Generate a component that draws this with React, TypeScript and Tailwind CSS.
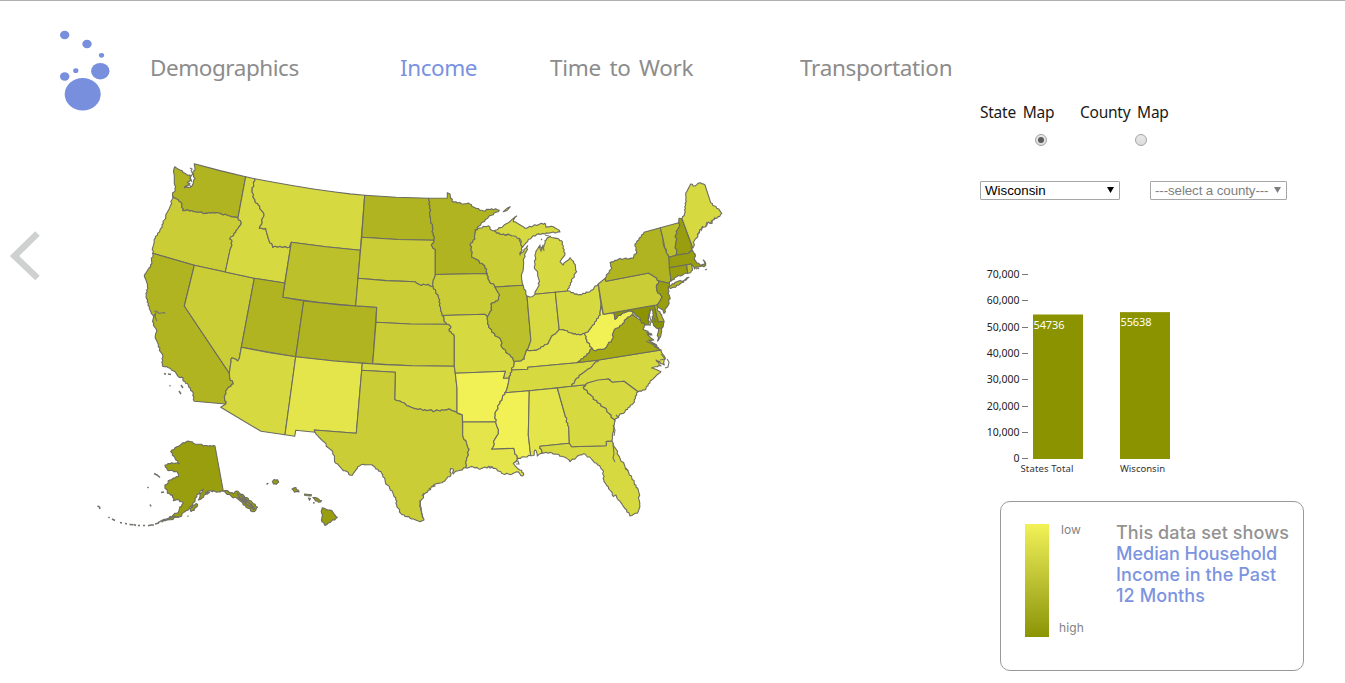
import React, { useState } from "react";

type Shape = { id: string; fill: string; d: string };

const C = {
  c1: "#f1f156",
  c2: "#e4e54b",
  c3: "#d7d941",
  c4: "#cacd35",
  c5: "#bcc12b",
  c6: "#b0b420",
  c7: "#a4a915",
  c8: "#989e0d",
  c9: "#8b9400",
};

// Outline notation: "x,y" continues with a straight edge, "~x,y" with a natural (river or coast) edge.
const STATES: Shape[] = [
  { id: "WA", fill: C.c6, d: "174.7,166.7 ~180,170 ~185,173.3 ~190,175 ~190.7,180 ~187.3,182.3 ~190,183.5 ~184.3,187.7 ~190,187.3 ~193.3,182.7 ~195,178.3 ~192.7,172.7 ~195,168.3 ~194.3,163.7 220,170.6 245.7,176.7 238,217.7 ~230,216 ~218.3,213 ~205,213.3 ~195,211.7 ~186.7,210 ~182.7,210.7 ~181.7,203.3 ~178.3,200 ~172.7,196.7 ~172.7,192.7 ~175.3,190.7 ~174.7,185 ~174.3,176.7 ~173.7,170" },
  { id: "OR", fill: C.c4, d: "172.7,196.7 ~178.3,200 ~181.7,203.3 ~182.7,210.7 ~186.7,210 ~195,211.7 ~205,213.3 ~218.3,213 ~230,216 ~238,217.7 ~241.3,222.7 ~236,230.7 ~230,239.3 ~232,241.7 ~230,250 225.3,272 194.3,265.3 152.7,253.3 ~154,240 ~160,230 ~165.7,216.7 ~170,206.7 ~172.7,196.7" },
  { id: "CA", fill: C.c6, d: "152.7,253.3 194.3,265.3 184.3,306 229.3,373.3 ~230,378.3 ~233.3,384 ~227.7,388.3 ~224.3,396.7 ~225.7,404 194.3,401.3 ~193.3,393.3 ~188.3,385 ~183.3,381 ~183.3,378 ~178.3,376.7 ~173.3,370.7 ~168.3,367.7 ~162.3,366 ~162.7,355 ~158.3,346.7 ~155.3,338.3 ~156.7,331.7 ~153.3,325 ~152.7,315 ~150,310 ~149.3,306.7 ~146,296.7 ~147.3,286.7 ~144.3,275 ~150.7,266.7 ~152.7,253.3" },
  { id: "NV", fill: C.c4, d: "194.3,265.3 225.3,272 254.3,278.3 241.3,347.3 239.3,358.3 ~237.3,361 ~231.7,358 ~230.7,363.3 229.3,373.3 184.3,306 194.3,265.3" },
  { id: "ID", fill: C.c3, d: "245.7,176.7 254.7,178.7 ~252,191.7 ~255,201.7 ~258.3,205 ~264,214 ~262,221.7 ~259.3,228.3 ~265.7,228.3 ~267.7,236 ~272.7,247.3 ~280,246.3 ~289.3,247.3 291.3,242.3 284.7,283 254.3,278.3 225.3,272 230,250 ~232,241.7 ~230,239.3 ~236,230.7 ~241.3,222.7 ~238,217.7 245.7,176.7" },
  { id: "MT", fill: C.c3, d: "254.7,178.7 275,182.5 295,186 315,189.2 335,192 350,193.9 364.7,195.3 360.3,250.3 326,246.8 291.3,242.3 289.3,247.3 ~280,246.3 ~272.7,247.3 ~267.7,236 ~265.7,228.3 ~259.3,228.3 ~262,221.7 ~264,214 ~258.3,205 ~255,201.7 ~252,191.7 ~254.7,178.7" },
  { id: "WY", fill: C.c5, d: "291.3,242.3 326,246.8 360.3,250.3 355.7,306 320,302.6 282.7,297.3 291.3,242.3" },
  { id: "UT", fill: C.c6, d: "254.3,278.3 284.7,283 282.7,297.3 303.7,301 295.7,356.7 241.3,347.3 254.3,278.3" },
  { id: "AZ", fill: C.c3, d: "241.3,347.3 268,352.5 295.7,356.7 285,434.7 261,431.3 220.7,407.3 225.7,404 ~224.3,396.7 ~227.7,388.3 ~233.3,384 ~230,378.3 ~229.3,373.3 230.7,363.3 ~231.7,358 ~237.3,361 ~239.3,358.3 241.3,347.3" },
  { id: "CO", fill: C.c6, d: "303.7,301 340,304.9 376.7,307.3 372.7,363.7 334,361 295.7,356.7 303.7,301" },
  { id: "NM", fill: C.c2, d: "295.7,356.7 334,361 362.3,363.3 356.3,433.3 314.3,430 315.3,432.3 295.7,430.3 294.7,436.3 285,434.7 295.7,356.7" },
  { id: "ND", fill: C.c6, d: "364.7,195.3 396,197.3 428.7,198.3 ~430,211.7 ~432.3,226.7 ~434,240.3 398,239.5 361.7,237.3 364.7,195.3" },
  { id: "SD", fill: C.c4, d: "361.7,237.3 398,239.5 434,240.3 ~431.3,245 ~435.3,249.3 435.3,274.5 ~433.3,280 ~433.3,286.7 ~428.3,284.3 ~420,285 ~415,281.7 386,280.6 358,278.3 361.7,237.3" },
  { id: "NE", fill: C.c4, d: "358,278.3 386,280.6 415,281.7 ~420,285 ~428.3,284.3 ~433.3,286.7 ~438.3,296.7 ~440.7,308.3 ~442.3,315.5 ~446.7,324.3 410,324 376,322.3 376.7,307.3 355.7,305.7 358,278.3" },
  { id: "KS", fill: C.c4, d: "376,322.3 410,324 446.7,324.3 ~451,326.7 ~449.3,331 ~454.3,336 454.3,366.3 412,365.8 372.7,363.7 376,322.3" },
  { id: "OK", fill: C.c3, d: "362.3,363.3 385,364.6 412,365.8 454.3,366.3 455.3,373.3 457,388.3 457,412.7 ~450,409.3 ~445,410 ~435,411 ~426.7,410.7 ~416.7,409 ~406.7,405.7 ~401.7,402.3 ~394.7,399.3 395.3,372.3 361.7,370.3 362.3,363.3" },
  { id: "TX", fill: C.c4, d: "361.7,370.3 395.3,372.3 394.7,399.3 ~401.7,402.3 ~406.7,405.7 ~416.7,409 ~426.7,410.7 ~435,411 ~445,410 ~450,409.3 ~457,412.7 ~462.3,414.7 462.7,436 ~469.3,449.3 ~466.7,460 ~465.7,467.7 ~458.3,470.7 ~453.3,474 ~453,469 ~450.5,468.5 ~451,475 ~443.3,481.7 ~433.3,485.7 ~426,492.7 ~420,501.7 ~420.7,510 ~424,520 ~420,521.7 ~411.7,519 ~400.7,513.3 ~396.7,505 ~395.7,497.7 ~387.3,485 ~381.7,473.3 ~373.3,466 ~363.3,464.3 ~357.7,466.7 ~352.3,475.3 ~343.3,470.7 ~335.7,463.3 ~332.7,452.3 ~315,432.3 314.3,430 356.3,433.3 361.7,370.3" },
  { id: "MN", fill: C.c6, d: "428.7,198.3 447.3,198 447.3,192.7 450,194 ~452,201.3 ~463.3,204 ~468.3,203 ~475,207.7 ~483.3,210.7 ~491.7,208.7 ~499.3,210.3 ~488.3,217.3 ~475.3,229.7 ~475,239 ~470.7,243.3 ~472,257.3 ~481.7,263.3 ~486.7,269 ~487.3,273.5 435.3,274.5 435.3,249.3 ~431.3,245 ~434,240.3 ~432.3,226.7 ~430,211.7 ~428.7,198.3" },
  { id: "IA", fill: C.c4, d: "435.3,274.5 487.3,273.5 ~489,280 ~495,287 ~499.7,295 ~497.7,300.7 ~491,304 ~491.7,310 ~487.3,316.7 ~485,314.3 442.3,315.5 ~440.7,308.3 ~438.3,296.7 ~433.3,286.7 ~433.3,280 ~435.3,274.5" },
  { id: "MO", fill: C.c3, d: "442.3,315.5 485,314.3 ~487.3,316.7 ~487.5,324 ~495,335.7 ~500,338.3 ~502.7,348.3 ~510,355 ~514.3,361.7 ~511.7,370 ~509.3,378.3 503.3,378.3 505.3,371.3 455.3,373.3 454.3,366.3 454.3,336 ~449.3,331 ~451,326.7 ~446.7,324.3 ~442.3,315.5" },
  { id: "AR", fill: C.c1, d: "455.3,373.3 505.3,371.3 503.3,378.3 509.3,378.3 ~505,392.7 ~500,403.3 ~495,413.3 ~495.7,421.7 462.7,422 462.3,414.7 457,412.7 457,388.3 455.3,373.3" },
  { id: "LA", fill: C.c2, d: "462.7,422 495.7,421.7 ~498.3,431.7 ~491.7,449 513.7,448.3 ~517.3,459.3 ~513.3,463.3 ~520,470 ~523.5,473 ~522.7,476 ~516.7,471.7 ~511.7,474.3 ~501.7,473.3 ~495,468.3 ~488.3,466.7 ~480,469.3 ~473.3,467 ~465.7,467.7 ~466.7,460 ~469.3,449.3 ~462.7,436 462.7,422" },
  { id: "WI", fill: C.c4, d: "475.3,229.7 ~488.3,225.7 ~490,229.3 ~494.3,230.7 ~500,234 ~516.7,235.7 ~520,241.7 ~522.3,246.7 ~520,255 ~527.7,245.7 ~523.3,260 ~522,273.3 ~523,285.3 495,287 ~489,280 ~487.3,273.5 ~486.7,269 ~481.7,263.3 ~472,257.3 ~470.7,243.3 ~475,239 ~475.3,229.7" },
  { id: "IL", fill: C.c5, d: "495,287 523,285.3 ~527,296 530.7,338.3 ~526.7,350 ~524.3,359.3 ~521.7,360.7 ~514.3,361.7 ~510,355 ~502.7,348.3 ~500,338.3 ~495,335.7 ~487.5,324 ~487.3,316.7 ~491.7,310 ~491,304 ~497.7,300.7 ~499.7,295 ~495,287" },
  { id: "MIU", fill: C.c3, d: "494.3,230.7 ~503.3,226 ~510.7,220.7 ~516.7,216 ~513.3,221.7 ~525,228.3 ~533.3,225.7 ~545,223.3 ~546,227.3 ~553.3,226.7 ~560,232 ~548.3,233.3 ~536.7,234.3 ~528.3,239.3 ~522.7,247.3 ~519.3,238.3 ~510,235 ~500,234 ~494.3,230.7" },
  { id: "MIL", fill: C.c3, d: "535,294.3 ~539.3,285 ~537.7,273.3 ~534.3,266.7 ~535.7,253.3 ~540,245 ~542,249.5 ~544,245 ~545,240.7 ~550,236 ~561.7,240.7 ~565,253.3 ~560,261.7 ~563.3,265 ~570,257.7 ~574,263.3 ~576.7,271.7 ~572.7,278.3 ~567.7,291 555.3,292.3 535,294.3" },
  { id: "IN", fill: C.c3, d: "527,296.3 ~530,297 ~535,294.3 555.3,292.3 559.2,329.5 ~553.3,335 ~548.3,343.3 ~538.3,349.3 ~526.7,350 ~530.7,338.3 527,296.3" },
  { id: "OH", fill: C.c3, d: "555.3,292.3 567.7,291 ~578.3,295 ~590,291.7 ~598.3,284 601,305 ~600.3,315 ~591.7,326.7 ~588.3,331.7 ~584.7,333.3 ~580,335 ~570,332.7 ~563,329.5 ~559.2,329.5 555.3,292.3" },
  { id: "KY", fill: C.c2, d: "514.3,361.7 ~521.7,360.7 ~524.3,359.3 ~526.7,350 ~538.3,349.3 ~548.3,343.3 ~553.3,335 ~559.2,329.5 ~563,329.5 ~570,332.7 ~580,335 ~584.7,333.3 ~586.7,341.7 ~592.3,348.3 ~583.3,358.3 576.7,362.7 527.7,367.3 527.7,369.3 511.7,370 ~514.3,361.7" },
  { id: "TN", fill: C.c3, d: "511.7,370 527.7,369.3 527.7,367.3 576.7,362.7 598.7,360 ~590,368.3 ~576.7,378.3 ~571.7,386.3 529.3,390.7 505,392.7 ~509.3,378.3 ~511.7,370" },
  { id: "MS", fill: C.c1, d: "505,392.7 529.3,390.7 528.3,435 530.7,455.7 ~523.3,456.7 ~517.3,459.3 ~513.7,448.3 491.7,449 ~498.3,431.7 ~495.7,421.7 ~495,413.3 ~500,403.3 ~505,392.7" },
  { id: "AL", fill: C.c2, d: "529.3,390.7 557.3,388 565,415 ~568.7,426.7 569.3,443.3 540,446.3 ~542.3,453.3 ~537.3,456 ~535,450 ~534,455.5 530.7,455.7 528.3,435 529.3,390.7" },
  { id: "FL", fill: C.c3, d: "540,446.3 569.3,443.3 571.7,446.7 606,445.7 ~606,441.7 ~612,440.7 ~613.3,443.3 ~620,458.3 ~628.3,471.7 ~638.3,490 ~639.7,505 ~637.3,513.3 ~630,516 ~626.7,510 ~618.3,500 ~616,495 ~613.3,496.5 ~608.3,486.7 ~604,481.7 ~602.7,470 ~596.7,463.3 ~585,454 ~580,455 ~570,461.7 ~563.3,456.7 ~551.7,452.7 ~542.3,453.3 ~540,446.3" },
  { id: "GA", fill: C.c3, d: "557.3,388 571.7,386.3 585.3,384.7 ~583.3,387.3 ~595,400 ~606.7,410 ~615,420.7 ~612.7,433.3 ~612,440.7 ~606,441.7 ~606,445.7 571.7,446.7 569.3,443.3 568.7,426.7 ~565,415 557.3,388" },
  { id: "NC", fill: C.c3, d: "598.7,360 661,350 ~665.3,358.3 ~664.3,365 ~656,360 ~661,366 ~657.3,366.7 ~651.5,368 ~661,371.7 ~656,376 ~651.7,380 ~645,390 ~638,391.7 624,381.3 612.3,382.3 ~608.3,379 588.3,382.7 585.3,384.7 571.7,386.3 ~576.7,378.3 ~590,368.3 ~598.7,360" },
  { id: "SC", fill: C.c3, d: "583.3,387.3 ~588.3,382.7 598,380 608.3,379 612.3,382.3 624,381.3 638,391.7 ~633.3,403.3 ~625,411.7 ~617.3,416.7 ~615,420.7 ~606.7,410 ~595,400 ~583.3,387.3" },
  { id: "VA", fill: C.c7, d: "576.7,362.7 ~583.3,358.3 ~592.3,348.3 ~595.7,350.7 ~605,348.3 ~611.7,340 ~614,330 ~621.7,325 ~628.3,316.7 ~633.3,315 ~641.7,320 ~645,325 ~643,329 ~652,335 ~647,334 ~653.8,340 ~649,340 ~657,346 ~652,344 ~661,350 598.7,360 576.7,362.7" },
  { id: "WV", fill: C.c1, d: "601,305 603.3,314.3 614,313 615,319.3 ~622.7,313 ~631,311 ~633.3,315 ~628.3,316.7 ~621.7,325 ~614,330 ~611.7,340 ~605,348.3 ~595.7,350.7 ~592.3,348.3 ~586.7,341.7 ~584.7,333.3 ~588.3,331.7 ~591.7,326.7 ~600.3,315 ~601,305" },
  { id: "MD", fill: C.c9, d: "614,312.5 654.3,305.3 658.3,321.7 664,321.3 ~661.7,328.3 ~659.3,329 ~655,326.7 ~651.7,320 ~653,312 ~650.7,309.5 ~648.3,316.7 ~649.3,325 ~641.7,323.3 ~638.3,316.7 ~631,311 ~622.7,313 ~615,319.3 614,312.5" },
  { id: "VAE", fill: C.c7, d: "658.3,328.5 ~661.5,328.7 ~659.3,338.3 ~657.5,341 ~658.3,328.5" },
  { id: "DE", fill: C.c6, d: "654.3,305.3 ~657.3,305.5 ~657.3,309.3 ~661.7,315 ~664,321.3 658.3,321.7 654.3,305.3" },
  { id: "PA", fill: C.c4, d: "598.3,284 605,278.3 606,281.3 649,273 ~653.3,276 ~659,281 ~656.7,285 ~657.3,291.7 ~662.3,296.7 ~656.7,305 654.3,305.3 603.3,314.3 598.3,284" },
  { id: "NY", fill: C.c6, d: "606,281.3 605,278.3 ~611.7,267.7 ~610,262.7 ~618.3,259.3 ~633.3,258.3 ~636.7,251.7 ~635,244 ~644,232.3 660.3,227.7 663.3,240 ~665,248.3 669,257.3 670,270 ~671,281 ~669.3,283.3 659,281 ~653.3,276 ~649,273 606,281.3" },
  { id: "LI", fill: C.c6, d: "668.3,287.3 ~676.7,281.7 ~684,280.5 ~689,277.3 ~680,284 ~670.7,288.5 ~668.3,287.3" },
  { id: "NJ", fill: C.c8, d: "659,281 669.3,283.3 ~668.3,289.3 ~669.7,296.7 ~668.3,305 ~664,313.3 ~661.7,309.3 ~656.7,305 ~662.3,296.7 ~657.3,291.7 ~656.7,285 ~659,281" },
  { id: "VT", fill: C.c5, d: "660.3,227.7 678.7,222.7 ~679.3,226.7 ~675.7,235 ~676,255.3 669,257.3 ~665,248.3 663.3,240 660.3,227.7" },
  { id: "NH", fill: C.c8, d: "678.7,222.7 679,218.3 682,218.7 691.7,245 ~692.7,250.7 ~688.3,253.3 676,255.3 ~675.7,235 ~679.3,226.7 ~678.7,222.7" },
  { id: "ME", fill: C.c3, d: "682,218.7 ~685.3,211.7 ~685.7,200 ~686.7,191.7 690.7,184 ~695,186 ~700,182.7 ~705,185 710.7,202.7 ~716.7,208.3 ~721.7,213.3 ~716.7,218.3 ~713,220 ~712,223.5 ~708.3,222 ~705,227 ~702,227 ~699,233.3 ~694.3,240.7 ~692.7,248.3 691.7,245 682,218.7" },
  { id: "MA", fill: C.c8, d: "669,257.3 676,255.3 688.3,253.3 ~692.7,250.7 ~695,254 ~694.3,259.3 ~700,265 ~704.7,264.3 ~703.3,260 ~705.7,263.3 ~704,266.7 ~696.7,267 ~694.5,269 ~691,264 686.7,264.7 669.3,267.7 669,257.3" },
  { id: "CT", fill: C.c8, d: "669.3,267.7 686.7,264.7 687.7,273.3 ~676.7,276.7 ~671,281 669.3,267.7" },
  { id: "RI", fill: C.c5, d: "686.7,264.7 691,264 ~692.3,268.3 ~690.7,272.7 687.7,273.3 686.7,264.7" },
  { id: "AK", fill: C.c8, d: "188.3,441 ~195,444 ~205,445.5 ~215,446 223.3,491 ~218.3,491.7 ~208.3,491 ~206.7,493.5 ~202,498 ~198.3,500 ~200,494 ~203.3,489.3 ~196.7,495 ~195,501.7 ~188.3,510 ~178.3,517.3 ~167.3,520 ~162,522 ~170,516.5 ~176.7,513.3 ~183.3,503.3 ~179,500 ~173.3,500.7 ~172.7,495 ~167.3,493.3 ~165,485 ~170,480 ~178.3,476.7 ~177.3,471.7 ~167.3,470 ~165,465 ~171.7,462.7 ~179.3,464 ~175,458.3 ~170.7,451.7 ~176.7,446.7 ~188.3,441" },
  { id: "AKP", fill: C.c8, d: "223.3,491 ~227,490.5 ~233.3,494 ~236.7,491 ~246.7,497.5 ~252,502 ~257.5,507.3 ~256,510 ~252.7,511.7 ~243.3,505 ~238,499 ~231.7,496.7 ~223.3,491" },
  { id: "AKK", fill: C.c8, d: "190.5,508 ~196,503.5 ~197.5,506 ~194,510.5 ~191,511.5 ~190.5,508" },
  { id: "HI1", fill: C.c8, d: "322.3,507.7 ~330,510 ~337.3,517.3 ~328.3,523 ~325,525.5 ~322,521.7 ~321.7,513.3 ~322.3,507.7" },
  { id: "HI2", fill: C.c8, d: "272.3,481.5 ~274,479.5 ~277.5,479.7 ~278.7,482 ~276.5,484.3 ~273.5,484 ~272.3,481.5" },
  { id: "HI3", fill: C.c8, d: "292,489 ~296,487.5 ~299,492 ~294.5,492.3 ~292,489" },
  { id: "HI4", fill: C.c8, d: "304.5,494 311.5,494.7 311,496 304.8,495.5 304.5,494" },
  { id: "HI5", fill: C.c8, d: "313,497.5 ~317,498 ~321.7,500.7 ~318.5,502.3 ~315.5,501 ~313,497.5" },
  { id: "HI6", fill: C.c8, d: "308.5,498 310.5,498.5 309.5,500.2 308.5,498" },
  { id: "IR", fill: C.c3, d: "503.3,211.7 507,208.3 510.3,206.7 507,210.5 503.3,211.7" },
];

const hash = (n: number) => {
  const s = Math.sin(n) * 43758.5453;
  return s - Math.floor(s) - 0.5;
};

type Pt = [number, number];

// Breaks an edge into small irregular steps; the result is the same in either direction.
function naturalEdge(a: Pt, b: Pt): Pt[] {
  const flip = a[0] > b[0] || (a[0] === b[0] && a[1] > b[1]);
  const [p, q] = flip ? [b, a] : [a, b];
  const len = Math.hypot(q[0] - p[0], q[1] - p[1]);
  const n = Math.max(1, Math.round(len / 1.8));
  const out: Pt[] = [];
  for (let i = 1; i < n; i++) {
    const t = i / n;
    const o = hash(p[0] * 12.9 + p[1] * 78.2 + i * 37.7) * 1.8;
    out.push([
      p[0] + (q[0] - p[0]) * t - ((q[1] - p[1]) / len) * o,
      p[1] + (q[1] - p[1]) * t + ((q[0] - p[0]) / len) * o,
    ]);
  }
  return flip ? out.reverse() : out;
}

function toPath(d: string): string {
  let prev: Pt | null = null;
  const pts: Pt[] = [];
  for (const token of d.split(" ")) {
    const natural = token[0] === "~";
    const [x, y] = (natural ? token.slice(1) : token).split(",").map(Number);
    const cur: Pt = [x, y];
    if (prev && natural) pts.push(...naturalEdge(prev, cur));
    pts.push(cur);
    prev = cur;
  }
  return "M" + pts.map((p) => p[0].toFixed(1) + "," + p[1].toFixed(1)).join("L") + "Z";
}

const INLETS = [
  "M154,311 l3,0.5 l2,2 l5,-1 l1,1 M156,312 l-1,5 l2,4 M154,314 l2,5",
  "M190,168 l2,1 l-1,2 M191,171 l2,3 l-3,3 l2,5 M186,187 l3,-3 l2,3",
  "M420,500 l1,10 l2,8 M422,496 l2,-3 M434,484 l1,2 l-3,1 M429,488 l2,2",
  "M488,466 l2,2 l3,-1 M515,462 l3,-1 l1,3 l-3,0",
  "M613,444 l1,10 l-1,4 l2,4 M626,468 l2,3",
  "M652,334 l-6,-2 M654,345 l-8,-4 M660,350 l-6,-4",
  "M667,359 l2,3 l-1,5 l-3,1 M661,354 l4,5 l-5,1",
  "M651,309 l-2,5 l2,7 l-1,5 M654,318 l2,5",
  "M697,235 l3,-4 M701,231 l2,-5 M706,226 l1,-4 M710,224 l2,-4 M714,220 l1,-3",
  "M539,246 l2,5 l2,-6 l1,6 M541,239 l1,1 M545,235 l4,1",
  "M616,415 l3,3 M613,425 l2,5 l-1,6",
  "M696,269 l2,-1 l1,1 M705,270 l2,-1",
];

const ISLANDS = [
  "M164,373.5 l2,0.8 M168,374 l3,0.6 M169.5,385.5 l1,0.5 M181,385 l2,3 M179,391 l2,3",
  "M154,473.5 l3,1.5 l3,2.5 M147.5,487 l1,1 M161,492.5 l3,-0.5 M150,504.5 l1,2",
  "M97.5,506 l2,1 l0.5,2 M108.5,517 l1,1 M112,519 l3,1.5 M120,522.5 l2,0.5 M125,523.5 l2,0.3 M129.5,524.5 l4,0.3 M134,524.5 l2,1",
  "M138,525.5 l2,0 M143,525.6 l2,0 M148,525.7 l3,-0.7 l3,0 M155,524 l4,-1 M158,522.6 l6,-3 l6,-0.5 M166,519.5 l8,-3 l5,0.5",
  "M266.5,484.5 l1.8,-1.5 M313,502.8 l1.6,0.3 M187.5,516 l1,0.4",
  "M237,493 l3,5 l4,2 l3,5 l5,2 l2,3 M240,494 l6,7 l5,3 l4,5 M244,497 l8,9 M238,497 l9,8 l6,4",
  "M205,492 l2,2 l3,-2 M207,493 l2,-1.5 M212,492 l2,-2",
];

function StateMap() {
  return (
    <svg className="block h-[380px] w-[640px]" viewBox="90 155 640 380" role="img">
      <g stroke="#6b6b62" strokeWidth="1.1" strokeLinejoin="round">
        {STATES.map((s) => (
          <path key={s.id} d={toPath(s.d)} fill={s.fill} />
        ))}
      </g>
      <g fill="none" stroke="#72726a" strokeWidth="1.1">
        {INLETS.map((d) => (
          <path key={d} d={d} />
        ))}
        {ISLANDS.map((d) => (
          <path key={d} d={d} strokeWidth="1.5" />
        ))}
      </g>
    </svg>
  );
}

function Logo() {
  return (
    <svg className="h-[82px] w-[52px] shrink-0" viewBox="59 29 52 82" fill="#778fdc">
      <ellipse cx="64.7" cy="35" rx="4.7" ry="4.2" />
      <ellipse cx="87" cy="44" rx="4.7" ry="4.2" />
      <ellipse cx="101.5" cy="55.3" rx="2.6" ry="2.4" />
      <ellipse cx="100.3" cy="71.2" rx="9.2" ry="8.3" />
      <ellipse cx="75.8" cy="70.7" rx="2.6" ry="2.4" />
      <ellipse cx="64.7" cy="76.5" rx="4.7" ry="4.2" />
      <ellipse cx="82.7" cy="94.2" rx="18" ry="16.2" />
    </svg>
  );
}

const TABS = [
  { label: "Demographics", box: "w-[250px]", spacing: "tracking-[-0.45px]" },
  { label: "Income", box: "w-[150px]", spacing: "tracking-[-0.45px]" },
  { label: "Time to Work", box: "w-[250px]", spacing: "tracking-[-0.3px]" },
  { label: "Transportation", box: "w-[180px]", spacing: "tracking-[-0.3px]" },
];

function Nav() {
  const [active, setActive] = useState("Income");
  return (
    <nav className="flex">
      {TABS.map((t) => (
        <button
          key={t.label}
          onClick={() => setActive(t.label)}
          className={`${t.box} ${t.spacing} text-left whitespace-nowrap font-['Noto_Sans',sans-serif] text-[22.5px] leading-8 font-normal [word-spacing:3px] ${
            active === t.label ? "text-[#7a92e0]" : "text-[#8c8c8c]"
          }`}
        >
          {t.label}
        </button>
      ))}
    </nav>
  );
}

function Radio({ checked, onSelect }: { checked: boolean; onSelect: () => void }) {
  return (
    <button
      role="radio"
      aria-checked={checked}
      onClick={onSelect}
      className="flex size-3 items-center justify-center rounded-full border border-[#a3a3a3] bg-linear-to-b from-[#e8e8e8] to-[#dcdcdc]"
    >
      {checked && <span className="size-1.5 rounded-full bg-[#5c5c5c]" />}
    </button>
  );
}

function Picker({ label, className }: { label: string; className: string }) {
  return (
    <button
      className={`flex h-[19px] items-center justify-between rounded-[1px] border border-[#a6a6a6] bg-white pl-1 font-['Liberation_Sans',sans-serif] text-[13.33px] leading-none whitespace-nowrap ${className}`}
    >
      <span>{label}</span>
      <svg className="-mt-0.5 h-1.5 w-[7px] shrink-0" viewBox="0 0 7 6" fill="currentColor">
        <path d="M0 0H7L3.5 6Z" />
      </svg>
    </button>
  );
}

const TICKS = ["70,000", "60,000", "50,000", "40,000", "30,000", "20,000", "10,000", "0"];
const BARS = [
  { label: "States Total", value: 54736, x: 1033, labelX: 1047, width: 53 },
  { label: "Wisconsin", value: 55638, x: 1120, labelX: 1142.5, width: 45 },
];

function BarChart() {
  return (
    <svg className="block h-[220px] w-[220px] font-['Noto_Sans',sans-serif]" viewBox="980 260 220 220">
      {TICKS.map((t, i) => {
        const y = 274.3 + i * 26.35;
        return (
          <g key={t}>
            <text x="1019.5" y={Math.floor(y) + 4} textAnchor="end" fontSize="10.5" fill="#222222">
              {t}
            </text>
            <path d={`M1022 ${Math.floor(y) + 0.5}h6`} stroke="#777777" />
          </g>
        );
      })}
      {BARS.map((b) => {
        const h = (b.value / 70000) * 184.8;
        return (
          <g key={b.label}>
            <rect x={b.x} y={459 - h} width="50" height={h} fill="#8b9400" />
            <text x={b.x + 0.5} y={473.2 - h} fontSize="11" fill="#ffffff" textLength="31">
              {b.value}
            </text>
            <text x={b.labelX} y="472" textAnchor="middle" fontSize="9.5" fill="#333333" textLength={b.width}>
              {b.label}
            </text>
          </g>
        );
      })}
    </svg>
  );
}

function Legend() {
  return (
    <div className="flex h-[170px] w-[304px] rounded-[10px] border border-[#999999] pt-[22px] pl-6 font-['Inter',sans-serif]">
      <div className="h-[113px] w-6 bg-linear-to-b from-[#f2f257] to-[#8b9400]" />
      <div className="flex h-[113px] w-[67px] flex-col justify-between pl-[10px] text-xs leading-3 text-[#828282]">
        <span className="pl-0.5">low</span>
        <span className="pb-[3px] tracking-[0.1px]">high</span>
      </div>
      <p className="-mt-0.5 text-[18px] leading-[21px] font-medium tracking-[0.1px] whitespace-nowrap text-[#929292]">
        This data set shows
        <span className="block text-[#7c94e0]">
          <span className="tracking-[0px]">Median Household</span>
          <br />
          Income in the Past
          <br />
          12 Months
        </span>
      </p>
    </div>
  );
}

export default function App() {
  const [mode, setMode] = useState<"state" | "county">("state");
  return (
    <div className="flex h-[683px] w-[1345px] overflow-hidden border-t border-[#b0b0b0] bg-white">
      <main className="w-[980px] shrink-0">
        <header className="flex h-[154px] pt-[28px] pl-[59px]">
          <Logo />
          <div className="pt-[23px] pl-[39px]">
            <Nav />
          </div>
        </header>
        <div className="flex items-start">
          <button aria-label="Previous" className="flex w-[90px] pt-[75px] pl-[10px]">
            <svg className="block h-[52px] w-[32px]" viewBox="10 230 32 52" fill="none" stroke="#cfd1d0" strokeWidth="6.5">
              <path d="M37.5 233.5L14.5 256L37.5 278" />
            </svg>
          </button>
          <StateMap />
        </div>
      </main>
      <aside className="flex w-[365px] flex-col pt-[99px]">
        <div className="flex font-['Noto_Sans',sans-serif] text-[15.5px] leading-6 font-normal tracking-[-0.25px] text-[#1a1a1a] [word-spacing:3px]">
          <div className="w-[100px]">
            <div className="whitespace-nowrap">State Map</div>
            <div className="pt-[10px] pl-[55px]">
              <Radio checked={mode === "state"} onSelect={() => setMode("state")} />
            </div>
          </div>
          <div className="w-[100px]">
            <div className="whitespace-nowrap">County Map</div>
            <div className="pt-[10px] pl-[55px]">
              <Radio checked={mode === "county"} onSelect={() => setMode("county")} />
            </div>
          </div>
        </div>
        <div className="flex gap-[30px] pt-[35px]">
          <Picker label="Wisconsin" className="w-[140px] pr-[5px] text-black" />
          <Picker label="---select a county---" className="w-[137px] pr-[5px] tracking-[-0.1px] text-[#7f7f7f]" />
        </div>
        <div className="pt-[60px]">
          <BarChart />
        </div>
        <div className="pt-[21px] pl-5">
          <Legend />
        </div>
      </aside>
    </div>
  );
}
